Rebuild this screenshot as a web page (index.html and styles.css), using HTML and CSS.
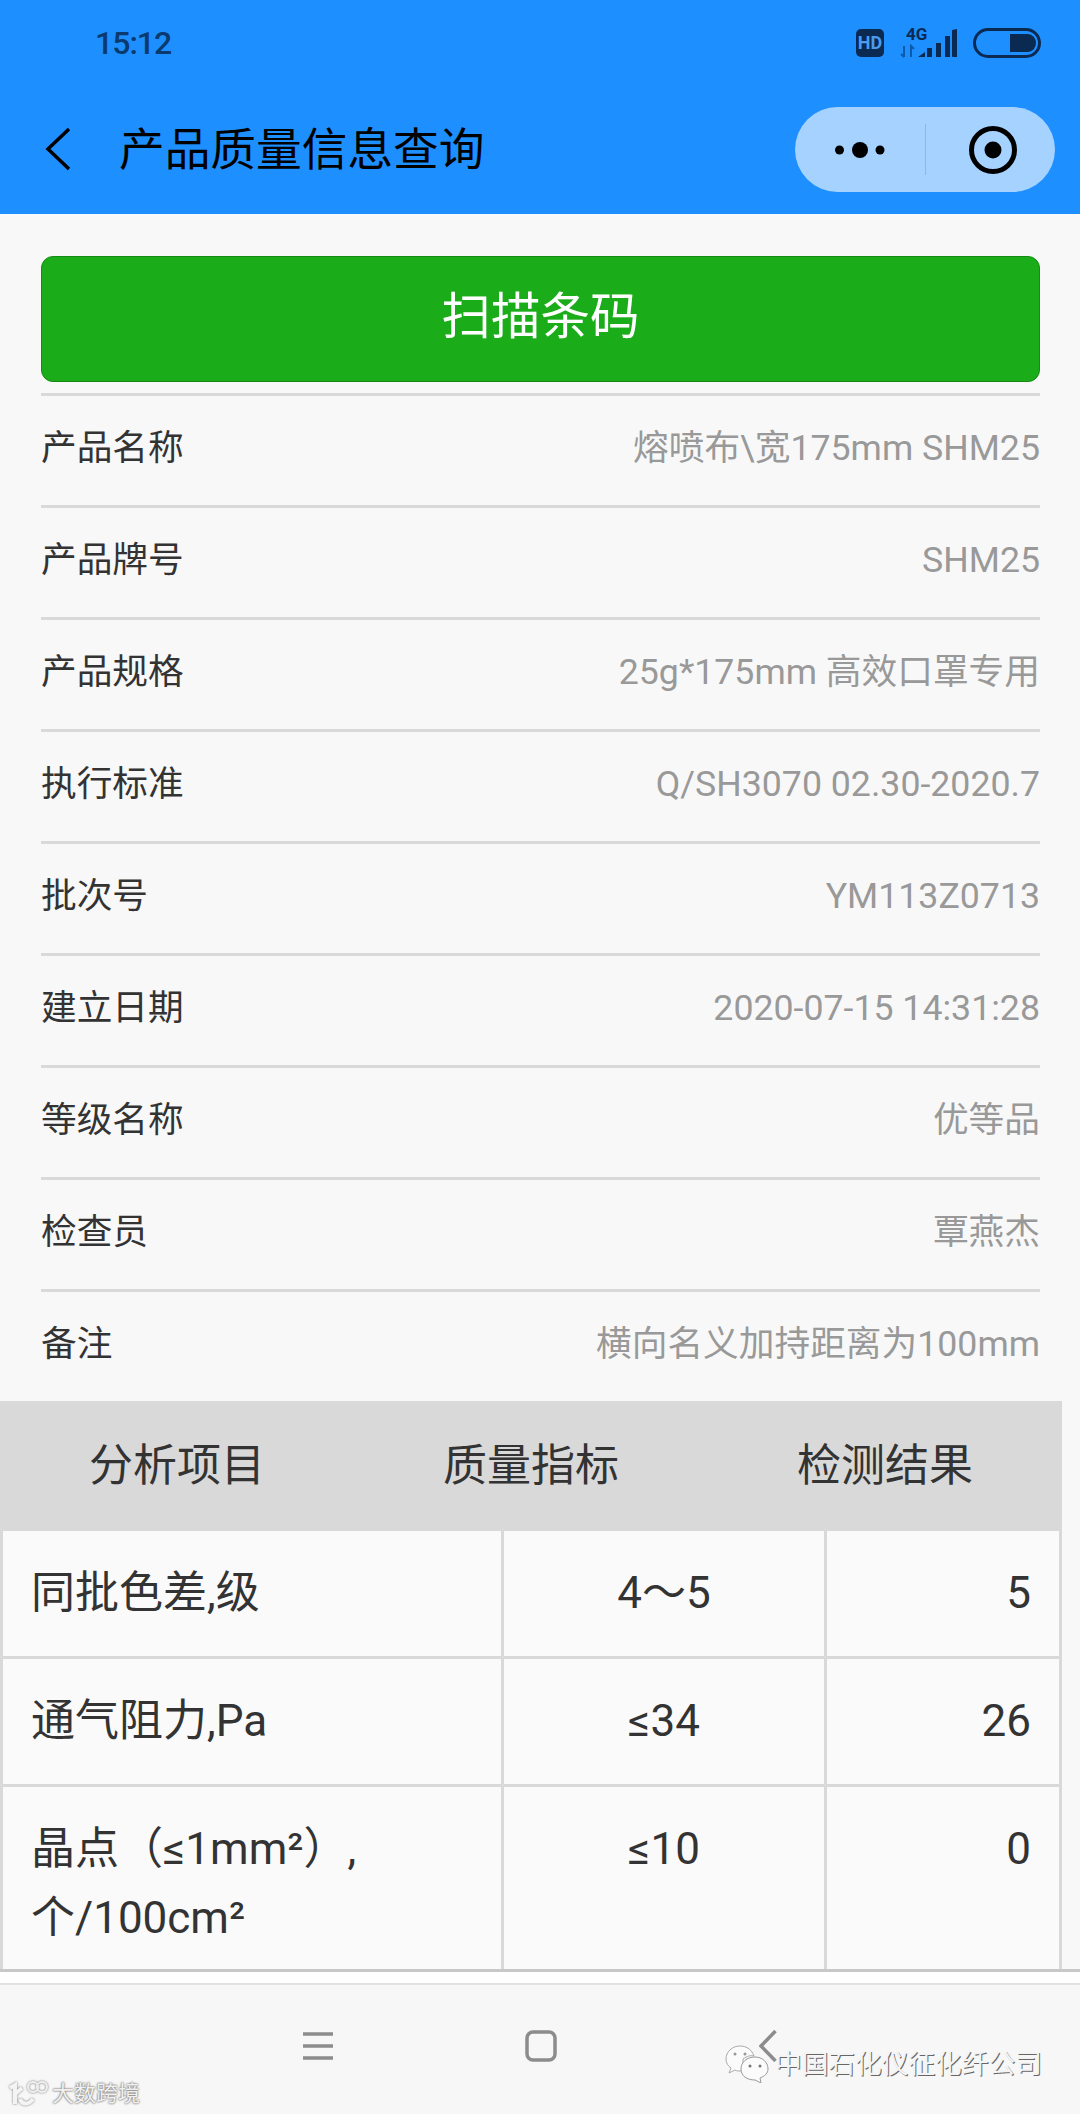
FILE: index.html
```html
<!DOCTYPE html>
<html lang="zh-CN">
<head>
    <meta charset="utf-8" />
    <title>产品质量信息查询</title>
    <link rel="stylesheet" href="styles.css">
</head>
<body>
    <header class="top">
        <div class="status">
            <span class="clock">15:12</span>
            <div class="status-icons">
                <span class="hd">HD</span>
                <div class="net">
                    <span class="net-text">4G</span>
                    <svg class="net-icon" width="60" height="32" viewBox="0 0 60 32">
                        <path d="M5 19v11M2 27l3 3M12 30V19l3 3" class="net-arrows"/>
                        <path d="M19 30l7-5v5zM28 30V21h5v9zM37 30V16h5v14zM46 30V9h5v21zM53 30V3l5-1v28z" class="net-bars"/>
                    </svg>
                </div>
                <svg class="battery" width="68" height="30" viewBox="0 0 68 30">
                    <rect x="1.5" y="1.5" width="65" height="27" rx="13.5" fill="none" stroke="#0a2a52" stroke-width="3"/>
                    <path d="M37 6h18a8 9 0 0 1 8 9 8 9 0 0 1-8 9H37z" fill="#0a2a52"/>
                </svg>
            </div>
        </div>
        <div class="titlebar">
            <svg class="back" width="26" height="44" viewBox="0 0 26 44">
                <path d="M24 2L3 22l21 20" fill="none" stroke="#000" stroke-width="3.5"/>
            </svg>
            <h1 class="title">产品质量信息查询</h1>
            <div class="capsule">
                <svg width="130" height="85" viewBox="0 0 130 85">
                    <circle cx="44.500" cy="43" r="4.500"/>
                    <circle cx="65" cy="43" r="8"/>
                    <circle cx="85" cy="43" r="4.500"/>
                </svg>
                <span class="capsule-line"></span>
                <svg width="129" height="85" viewBox="0 0 129 85">
                    <circle cx="67" cy="43" r="21.500" fill="none" stroke="#000" stroke-width="5"/>
                    <circle cx="67" cy="43" r="8.500"/>
                </svg>
            </div>
        </div>
    </header>

    <main class="page">
        <button class="scan">扫描条码</button>

        <ul class="info">
            <li class="info-row"><span>产品名称</span><span class="info-val">熔喷布\宽175mm SHM25</span></li>
            <li class="info-row"><span>产品牌号</span><span class="info-val">SHM25</span></li>
            <li class="info-row"><span>产品规格</span><span class="info-val">25g*175mm 高效口罩专用</span></li>
            <li class="info-row"><span>执行标准</span><span class="info-val">Q/SH3070 02.30-2020.7</span></li>
            <li class="info-row"><span>批次号</span><span class="info-val">YM113Z0713</span></li>
            <li class="info-row"><span>建立日期</span><span class="info-val">2020-07-15 14:31:28</span></li>
            <li class="info-row"><span>等级名称</span><span class="info-val">优等品</span></li>
            <li class="info-row"><span>检查员</span><span class="info-val">覃燕杰</span></li>
            <li class="info-row"><span>备注</span><span class="info-val">横向名义加持距离为100mm</span></li>
        </ul>

        <div class="thead">
            <span>分析项目</span>
            <span>质量指标</span>
            <span>检测结果</span>
        </div>
        <div class="tbody">
            <div class="cell">同批色差,级</div>
            <div class="cell mid">4～5</div>
            <div class="cell end">5</div>
            <div class="cell">通气阻力,Pa</div>
            <div class="cell mid">≤34</div>
            <div class="cell end">26</div>
            <div class="cell tall">晶点（≤1mm²）,个/100cm²</div>
            <div class="cell tall mid">≤10</div>
            <div class="cell tall end">0</div>
        </div>
    </main>

    <div class="gap"></div>

    <nav class="sysnav">
        <svg width="30" height="28" viewBox="0 0 30 28">
            <path d="M0 2h30M0 14h30M0 26h30" stroke="#8c8c8c" stroke-width="3.500"/>
        </svg>
        <svg width="32" height="32" viewBox="0 0 32 32">
            <rect x="2" y="2" width="28" height="28" rx="6" fill="none" stroke="#8c8c8c" stroke-width="3.500"/>
        </svg>
        <svg class="sysnav-back" width="18" height="32" viewBox="0 0 18 32">
            <path d="M16.500 1L2 16l14.500 15" fill="none" stroke="#8c8c8c" stroke-width="3.500"/>
        </svg>
    </nav>

    <div class="mark mark-left">
        <svg class="mark-logo" width="40" height="28" viewBox="0 0 40 28">
            <path d="M2 8l5-3v19M7 14l7-6M12 19c2 6 9 6 13 0" fill="none" stroke="#f4f4f4" stroke-width="4"/>
            <circle cx="25" cy="7" r="5" fill="none" stroke="#f0f0f0" stroke-width="2"/>
            <circle cx="34" cy="7" r="5" fill="none" stroke="#f0f0f0" stroke-width="2"/>
        </svg>
        <span>大数跨境</span>
    </div>
    <div class="mark mark-right">
        <svg width="44" height="38" viewBox="0 0 44 38">
            <path d="M15 1C7 1 1 7 1 14c0 4 2 7 5 9l-2 5 6-3c2 1 3 1 5 1h3V14c4-3 8-4 11-3C27 5 22 1 15 1z" fill="#fbfbfb" stroke="#aaa"/>
            <path d="M30 12c-8 0-14 5-14 12s6 11 14 11l6 3-1-5c5-2 8-5 8-9 0-7-6-12-13-12z" fill="#fbfbfb" stroke="#999"/>
            <circle cx="10" cy="9" r="1.500" fill="#999"/><circle cx="20" cy="9" r="1.500" fill="#999"/>
            <circle cx="25" cy="21" r="1.500" fill="#777"/><circle cx="35" cy="21" r="1.500" fill="#777"/>
        </svg>
        <span>中国石化仪征化纤公司</span>
    </div>
</body>
</html>
```

FILE: styles.css
```css
* {
    margin: 0;
    padding: 0;
    box-sizing: border-box;
}

body {
    width: 1080px;
    height: 2114px;
    position: relative;
    overflow: hidden;
    background-color: #f8f8f8;
    font-family: "Roboto", "Noto Sans CJK SC", sans-serif;
    color: #333;
}

/* top blue area */
.top {
    height: 214px;
    background-color: #1e8fff;
}
.status {
    height: 84px;
    padding: 2px 39px 0 95px;
    display: flex;
    align-items: center;
    justify-content: space-between;
}
.clock {
    font-size: 32px;
    font-weight: 500;
    letter-spacing: -1px;
    color: #0a3a6e;
}
.status-icons {
    display: flex;
    align-items: center;
}
.hd {
    width: 28px;
    height: 28px;
    margin-right: 15px;
    border-radius: 5px;
    background-color: #0a2a52;
    color: #4a9cf0;
    font-size: 18px;
    font-weight: 700;
    line-height: 28px;
    text-align: center;
}
.net {
    width: 60px;
    height: 32px;
    margin-right: 14px;
    position: relative;
}
.net-icon {
    display: block;
}
/* the 4G tag sits over the signal icon */
.net-text {
    position: absolute;
    left: 7px;
    top: -3px;
    font-size: 17px;
    font-weight: 700;
    line-height: 20px;
    color: #0a2a52;
}
.net-arrows {
    fill: none;
    stroke: #0f5aa8;
    stroke-width: 2;
}
.net-bars {
    fill: #0a2a52;
}
.titlebar {
    height: 130px;
    padding: 0 25px 0 45px;
    display: flex;
    align-items: center;
}
.back {
    margin-right: 48px;
}
.title {
    flex: 1;
    padding-top: 3px;
    font-size: 45.700px;
    line-height: 46px;
    font-weight: 400;
    color: #000;
}
.capsule {
    width: 260px;
    height: 85px;
    border-radius: 43px;
    background-color: #a6d2ff;
    display: flex;
    align-items: center;
}
.capsule-line {
    width: 1px;
    height: 51px;
    background-color: #8db8e4;
}

/* content */
.page {
    height: 1758px;
    padding-top: 42px;
}
.scan {
    display: block;
    width: 999px;
    height: 126px;
    margin: 0 0 11px 41px;
    padding-bottom: 4px;
    border: 1px solid #158a14;
    border-radius: 12px;
    background-color: #1aad19;
    color: #fff;
    font-family: inherit;
    font-size: 49.500px;
    line-height: 49px;
}
.info {
    list-style: none;
    height: 1008px;
}
.info-row {
    height: 112px;
    margin: 0 40px 0 41px;
    padding-bottom: 5px;
    border-top: 3px solid #d9d9d9;
    display: flex;
    align-items: center;
    justify-content: space-between;
    font-size: 35.700px;
    line-height: 36px;
}
.info-val {
    color: #999;
}

.thead {
    width: 1062px;
    height: 130px;
    background-color: #d9d9d9;
    display: grid;
    grid-template-columns: 1fr 1fr 1fr;
    align-items: center;
    text-align: center;
    font-size: 44px;
    line-height: 44px;
}
.tbody {
    width: 1062px;
    display: grid;
    grid-template-columns: 501px 323px 235px;
    border-left: 3px solid #d9d9d9;
    background-color: #fafafa;
}
.cell {
    height: 128px;
    padding: 28px 28px 0;
    border-right: 3px solid #d9d9d9;
    border-bottom: 3px solid #d9d9d9;
    font-size: 44px;
    line-height: 69px;
}
.tall {
    height: 185px;
}
.mid {
    text-align: center;
}
.end {
    text-align: right;
}

/* white strip above the system nav */
.gap {
    height: 14px;
    margin-top: -3px;
    background-color: #fff;
    border-top: 3px solid #c8c8c8;
    position: relative;
}
.sysnav {
    height: 131px;
    background-color: #f7f7f7;
    border-top: 2px solid #e2e2e2;
    display: flex;
    justify-content: center;
    align-items: center;
    gap: 192px;
    padding-bottom: 8px;
}
.sysnav-back {
    margin-left: 10px;
}

/* watermarks over the page */
.mark {
    position: absolute;
    display: flex;
    align-items: center;
}
.mark-left {
    left: 8px;
    top: 2080px;
    gap: 4px;
    font-size: 22px;
    line-height: 26px;
    color: #f0f0f0;
    text-shadow: 0 0 2px #777, 0 0 2px #777;
}
.mark-logo {
    filter: drop-shadow(0 0 1px #777);
}
.mark-right {
    left: 725px;
    top: 2045px;
    gap: 6px;
    font-size: 26.700px;
    line-height: 38px;
    color: #f4f4f4;
    text-shadow: 1px 1px 0 #666;
}
```
